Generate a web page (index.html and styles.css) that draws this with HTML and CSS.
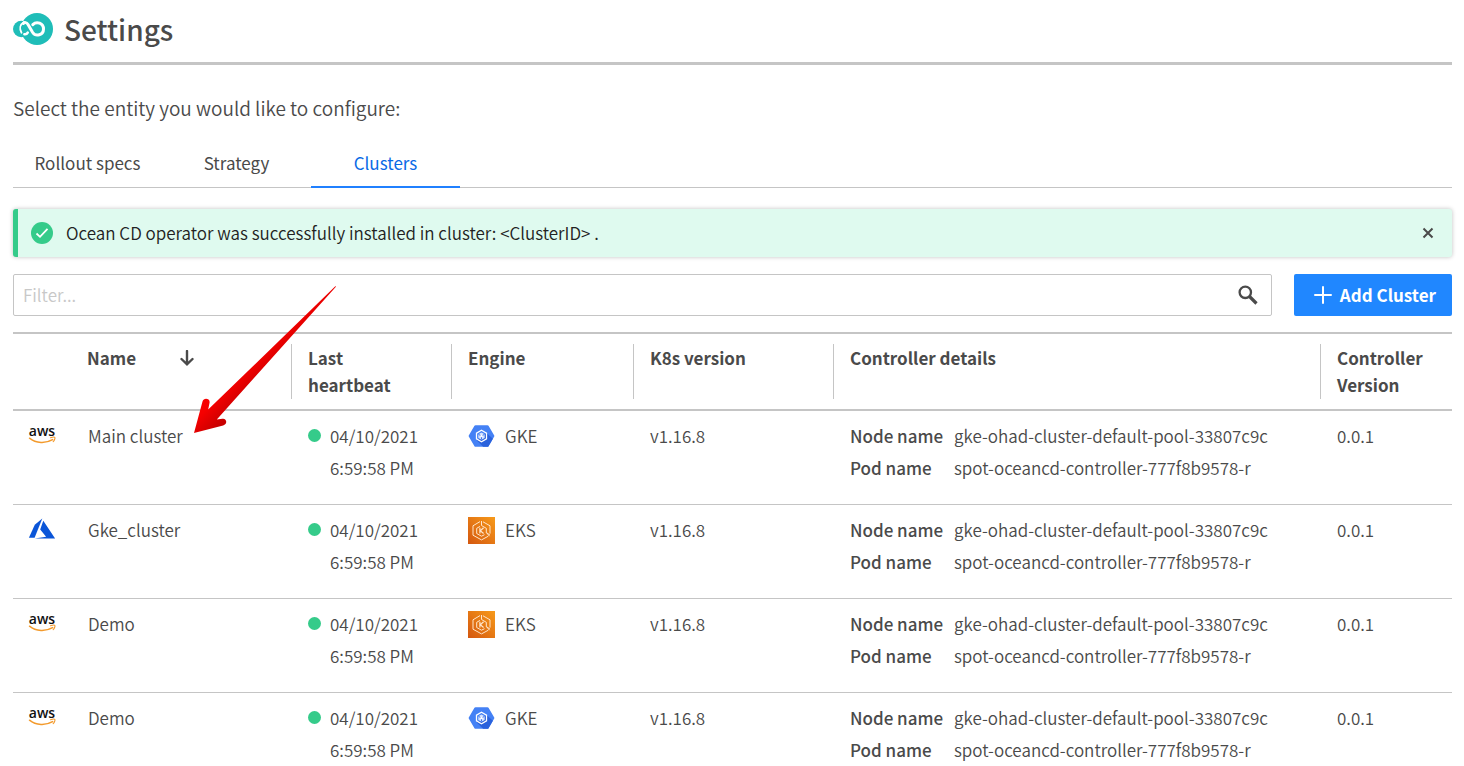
FILE: index.html
```html
<!DOCTYPE html>
<html lang="en">
<head>
<meta charset="utf-8">
<meta name="viewport" content="width=device-width, initial-scale=1">
<title>Settings</title>
<link rel="stylesheet" href="styles.css">
</head>
<body>
<svg class="defs" aria-hidden="true">
  <defs>
    <linearGradient id="eks-bg" x1="0" y1="1" x2="1" y2="0"><stop offset="0" stop-color="#d4570f"/><stop offset="1" stop-color="#f79a1a"/></linearGradient>
    <linearGradient id="arrow-bg" gradientUnits="userSpaceOnUse" x1="66" y1="71" x2="81" y2="86"><stop offset="0" stop-color="#f60000"/><stop offset="1" stop-color="#c80000"/></linearGradient>
    <symbol id="aws" viewBox="0 0 28 20">
      <text class="aws-text" x="14" y="10" text-anchor="middle">aws</text>
      <path d="M1.500 12.200C8 17.600 18 17.600 24.600 13.600" fill="none" stroke="#f39a2c" stroke-width="1.500" stroke-linecap="round"/>
      <path d="M22.500 11.800c2-.8 4.100-.8 4.400-.3s-.3 2.900-1.700 4.100" fill="none" stroke="#f39a2c" stroke-width="1.100" stroke-linecap="round"/>
    </symbol>
    <symbol id="azure" viewBox="0 0 28 22">
      <path d="M14.300.500 6.800 6.800.900 19.700h5.700z" fill="#0a55d8"/>
      <path d="M15.300 2.800 12.200 11.500l5.900 7.300-11.400 1.700h20.400z" fill="#0a55d8"/>
    </symbol>
    <symbol id="gke" viewBox="0 0 28 24">
      <path d="M7.800.800h12.400q.700 0 1.100.600l5.900 10q.300.600 0 1.200l-5.900 10q-.400.600-1.100.600H7.800q-.700 0-1.100-.600l-5.900-10q-.300-.600 0-1.200l5.900-10q.400-.600 1.100-.600z" fill="#4481f5"/>
      <path d="M19.200 8.800l6.600 6-4.500 7.800q-.400.600-1.100.600h-4.500l-6.800-6.700z" fill="#2a62dc"/>
      <path d="M14 6l5.200 3v6L14 18l-5.200-3V9z" fill="none" stroke="#fff" stroke-width="1.300"/>
      <path d="M14 8.300l3.300 1.900v3.800L14 15.800 10.700 14v-3.800z" fill="#d4e2ff"/>
      <path d="M10.900 10.300 14 12l3.100-1.700M14 12v3.600" fill="none" stroke="#3873e8" stroke-width="1"/>
      <circle cx="14" cy="11.900" r="1.300" fill="#fff"/>
    </symbol>
    <symbol id="eks" viewBox="0 0 27 27">
      <path d="M0 0h27v27H0z" fill="url(#eks-bg)"/>
      <g fill="none" stroke="#ffe6cb" stroke-width="1">
        <path d="M15 4.800l7 4v7.800M20.300 19.200l-6.800 3.700L5 18.200V8.800l7-4.200"/>
        <path d="M13.500 4v4.500l4.800 2.800v4.200l3.600 2.500M16.500 17.700l-3 1.500-4.800-2.700v-5.200l3.300-1.900M18.300 15.500l3.200 3.700"/>
        <path d="M11.900 10.800v5.700M15.600 10.800l-3.300 3 3.300 2.700" stroke-width="1.200"/>
      </g>
    </symbol>
  </defs>
</svg>

<main class="page">
  <header class="page-header">
    <svg class="logo" viewBox="0 0 40 34" aria-hidden="true">
      <circle cx="24" cy="17" r="16" fill="#1fbdb8"/>
      <circle cx="8.300" cy="17" r="8.300" fill="#1fbdb8"/>
      <path d="M19.800 12.600C23.800 8.700 30.500 11.300 30.500 17c0 6.300-7.800 7.900-10.800 3.500L15 12.500c-1.500-2.400-3.500-2.300-4.700-1" fill="none" stroke="#fff" stroke-width="3" stroke-linecap="round"/>
      <path d="M11 10C6.800 12.500 6.300 17 8.500 20.800" fill="none" stroke="#fff" stroke-width="1.800" stroke-linecap="round"/>
      <path d="M11.400 22.200q2.200.4 3.300-1.500" fill="none" stroke="#fff" stroke-width="2.600" stroke-linecap="round"/>
    </svg>
    <h1 class="title">Settings</h1>
  </header>

  <p class="intro">Select the entity you would like to configure:</p>

  <nav class="tabs" aria-label="Entities">
    <a class="tab" href="#specs">Rollout specs</a>
    <a class="tab" href="#strategy">Strategy</a>
    <a class="tab tab-active" href="#clusters" aria-current="page">Clusters</a>
  </nav>

  <div class="alert" role="status">
    <svg class="alert-icon" viewBox="0 0 22 22" aria-hidden="true"><circle cx="11" cy="11" r="11" fill="#35cb8a"/><path d="M5.500 11.500l3.500 3.300 7.500-8" fill="none" stroke="#fff" stroke-width="1.800"/></svg>
    <span class="alert-text">Ocean CD operator was successfully installed in cluster: &lt;ClusterID&gt; .</span>
    <button class="close" type="button" aria-label="Dismiss"><svg class="close-icon" viewBox="0 0 12 12"><path d="M1.500 1.500l9 9M10.500 1.500l-9 9" stroke="#4a4a4a" stroke-width="2"/></svg></button>
  </div>

  <div class="toolbar">
    <div class="search">
      <input class="filter" type="text" placeholder="Filter..." aria-label="Filter">
      <svg class="search-icon" viewBox="0 0 20 20" aria-hidden="true"><circle cx="7.300" cy="7.300" r="5.700" fill="none" stroke="#4a4a4a" stroke-width="2.300"/><path d="M11.500 11.500l7 7" stroke="#4a4a4a" stroke-width="3.200"/></svg>
    </div>
    <button class="add" type="button"><svg class="add-icon" viewBox="0 0 18 18" aria-hidden="true"><path d="M9 1v16M1 9h16" stroke="#fff" stroke-width="2" stroke-linecap="round"/></svg><span class="add-text">Add Cluster</span></button>
  </div>

  <table class="clusters">
    <colgroup><col class="c-cloud"><col class="c-name"><col class="c-beat"><col class="c-engine"><col class="c-k8s"><col><col class="c-version"></colgroup>
    <thead>
      <tr>
        <th aria-label="Cloud"></th>
        <th><div class="head head-name">Name<button class="sort" type="button" aria-label="Sort by name"><svg class="sort-icon" viewBox="0 0 14 16"><path d="M7 1v13M1.500 9l5.500 5.300L12.500 9" fill="none" stroke="#4a4a4a" stroke-width="2.400" stroke-linecap="round"/></svg></button></div></th>
        <th><div class="head head-line">Last heartbeat</div></th>
        <th><div class="head head-line">Engine</div></th>
        <th><div class="head head-line">K8s version</div></th>
        <th><div class="head head-line">Controller details</div></th>
        <th><div class="head head-line">Controller Version</div></th>
      </tr>
    </thead>
    <tbody>
      <tr>
        <td class="cloud"><svg class="aws" role="img" aria-label="AWS"><use href="#aws"/></svg></td>
        <td>Main cluster</td>
        <td><div class="beat"><span class="dot"></span><span class="when">04/10/2021<br>6:59:58 PM</span></div></td>
        <td><div class="engine"><svg class="gke" aria-hidden="true"><use href="#gke"/></svg>GKE</div></td>
        <td>v1.16.8</td>
        <td><dl class="details"><dt>Node name</dt><dd>gke-ohad-cluster-default-pool-33807c9c</dd><dt>Pod name</dt><dd>spot-oceancd-controller-777f8b9578-r</dd></dl></td>
        <td>0.0.1</td>
      </tr>
      <tr>
        <td class="cloud"><svg class="azure" role="img" aria-label="Azure"><use href="#azure"/></svg></td>
        <td>Gke_cluster</td>
        <td><div class="beat"><span class="dot"></span><span class="when">04/10/2021<br>6:59:58 PM</span></div></td>
        <td><div class="engine"><svg class="eks" aria-hidden="true"><use href="#eks"/></svg>EKS</div></td>
        <td>v1.16.8</td>
        <td><dl class="details"><dt>Node name</dt><dd>gke-ohad-cluster-default-pool-33807c9c</dd><dt>Pod name</dt><dd>spot-oceancd-controller-777f8b9578-r</dd></dl></td>
        <td>0.0.1</td>
      </tr>
      <tr>
        <td class="cloud"><svg class="aws" role="img" aria-label="AWS"><use href="#aws"/></svg></td>
        <td>Demo</td>
        <td><div class="beat"><span class="dot"></span><span class="when">04/10/2021<br>6:59:58 PM</span></div></td>
        <td><div class="engine"><svg class="eks" aria-hidden="true"><use href="#eks"/></svg>EKS</div></td>
        <td>v1.16.8</td>
        <td><dl class="details"><dt>Node name</dt><dd>gke-ohad-cluster-default-pool-33807c9c</dd><dt>Pod name</dt><dd>spot-oceancd-controller-777f8b9578-r</dd></dl></td>
        <td>0.0.1</td>
      </tr>
      <tr>
        <td class="cloud"><svg class="aws" role="img" aria-label="AWS"><use href="#aws"/></svg></td>
        <td>Demo</td>
        <td><div class="beat"><span class="dot"></span><span class="when">04/10/2021<br>6:59:58 PM</span></div></td>
        <td><div class="engine"><svg class="gke" aria-hidden="true"><use href="#gke"/></svg>GKE</div></td>
        <td>v1.16.8</td>
        <td><dl class="details"><dt>Node name</dt><dd>gke-ohad-cluster-default-pool-33807c9c</dd><dt>Pod name</dt><dd>spot-oceancd-controller-777f8b9578-r</dd></dl></td>
        <td>0.0.1</td>
      </tr>
    </tbody>
  </table>

  <svg class="pointer" viewBox="0 0 144 150" aria-hidden="true">
    <path d="M142.300 1.300q1-.3.400.700L23.800 134.500l5.600-.800c4.500-.800 5.400 5.600.700 6.700L1 148l8.500-31.500c1.200-4.500 8.200-3 7 1.400l-1.300 6.700z" fill="url(#arrow-bg)"/>
  </svg>
</main>
</body>
</html>
```

FILE: styles.css
```css
* { box-sizing: border-box; }
body {
  margin: 0;
  background: #fff;
  color: #4a4a4a;
  font-family: "Noto Sans CJK SC", "Noto Sans", sans-serif;
  font-size: 16px;
}
button, input { font: inherit; }
svg { display: block; flex: none; }
.defs { position: absolute; width: 0; height: 0; }
.page { position: relative; padding: 0 12px 0 13px; }

.page-header {
  display: flex;
  align-items: center;
  gap: 11px;
  height: 65px;
  padding-bottom: 4px;
  border-bottom: 3px solid #c5c5c5;
}
.logo { width: 40px; height: 34px; }
.title { margin: 0; font-size: 28px; font-weight: 500; line-height: 40px; }
.intro { margin: 27px 0 0; font-size: 19px; font-weight: 350; line-height: 32px; }

.tabs {
  display: flex;
  height: 48px;
  margin-top: 16px;
  border-bottom: 1px solid #c5c5c5;
}
.tab {
  width: 149px;
  height: 48px;
  color: #4a4a4a;
  font-size: 17px;
  line-height: 46px;
  text-align: center;
  text-decoration: none;
}
.tab-active { border-bottom: 2px solid #2080ff; color: #0a6ae6; }

.alert {
  display: flex;
  align-items: center;
  height: 48px;
  margin-top: 21px;
  padding: 0 18px 0 13px;
  border-left: 5px solid #35cb8a;
  border-radius: 3px;
  background: #dffaef;
  box-shadow: 0 0 4px rgba(0, 0, 0, .25);
  color: #222;
  font-size: 17px;
  font-weight: 350;
}
.alert-icon { width: 22px; height: 22px; }
.alert-text { flex: 1; padding-bottom: 2px; margin-left: 13px; }
.close { padding: 0; border: 0; background: none; }
.close-icon { width: 12px; height: 12px; }

.toolbar { display: flex; gap: 22px; height: 42px; margin-top: 17px; }
.search {
  display: flex;
  flex: 1;
  align-items: center;
  padding: 0 13px 0 9px;
  border: 1px solid #c5c5c5;
  border-radius: 2px;
}
.filter { flex: 1; min-width: 0; padding: 0 0 2px; border: 0; outline: 0; background: none; color: #4a4a4a; font-size: 17px; font-weight: 350; }
.filter::placeholder { color: #c8c8c8; }
.search-icon { width: 20px; height: 20px; }
.add {
  display: flex;
  align-items: center;
  gap: 8px;
  padding: 0 16px 0 20px;
  border: 0;
  border-radius: 2px;
  background: #2087ff;
  color: #fff;
  font-size: 17px;
  font-weight: 700;
}
.add-icon { width: 18px; height: 18px; }
.add-text { padding-bottom: 2px; }

.clusters {
  width: 100%;
  margin-top: 16px;
  table-layout: fixed;
  border-spacing: 0;
  border-top: 2px solid #c5c5c5;
}
.c-cloud { width: 58px; }
.c-name { width: 220px; }
.c-beat { width: 160px; }
.c-engine { width: 182px; }
.c-k8s { width: 200px; }
.c-version { width: 132px; }
th { padding: 10px 0; border-bottom: 2px solid #c5c5c5; text-align: left; vertical-align: top; }
.head { height: 55px; padding-left: 16px; font-size: 17px; line-height: 27px; }
.head-line { border-left: 1px solid #c5c5c5; padding-right: 32px; }
.head-name { display: flex; gap: 44px; align-items: flex-start; }
.sort { padding: 6px 0; border: 0; background: none; }
.sort-icon { width: 14px; height: 16px; }
td {
  padding: 9px 0 20px 17px;
  border-bottom: 1px solid #c5c5c5;
  font-size: 17px;
  font-weight: 350;
  line-height: 32px;
  vertical-align: top;
}
tbody tr:last-child td { padding-bottom: 0; border-bottom: 0; }
.cloud { padding-left: 15px; }
.aws { width: 28px; height: 20px; margin-top: 6px; }
.aws-text { fill: #111; font: 600 14px "Open Sans", sans-serif; }
.azure { width: 28px; height: 22px; margin-top: 4px; }
.beat { display: flex; }
.dot { width: 13px; height: 13px; margin: 9px 9px 0 0; border-radius: 50%; background: #35cb8a; }
.engine { display: flex; align-items: center; gap: 10px; }
.gke { width: 27px; height: 24px; }
.eks { width: 27px; height: 27px; }
.details { display: grid; grid-template-columns: 104px 1fr; margin: 0; }
dt { font-weight: 500; }
dd { margin: 0; }

.pointer { position: absolute; left: 193px; top: 285px; width: 144px; height: 150px; }
```
